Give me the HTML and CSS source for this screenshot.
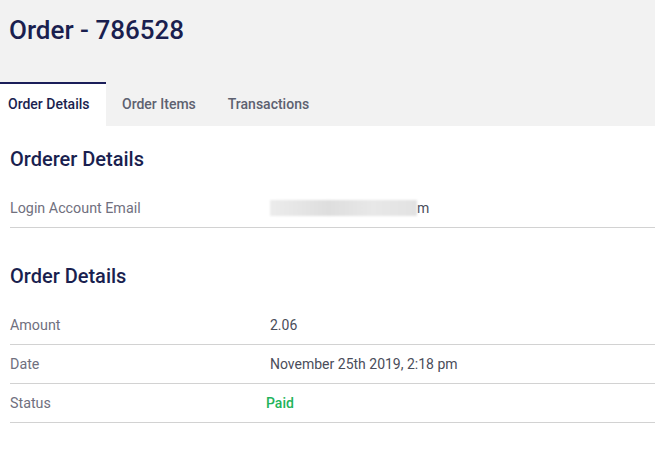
FILE: index.html
```html
<!DOCTYPE html>
<html>
<head>
<meta charset="utf-8">
<link rel="stylesheet" href="styles.css">
</head>
<body>
<header class="header">
  <h1 class="title">Order - 786528</h1>
  <nav class="tabs">
    <div class="tab active">Order Details</div>
    <div class="tab">Order Items</div>
    <div class="tab">Transactions</div>
  </nav>
</header>
<main class="content">
  <section class="section">
    <h2 class="section-title">Orderer Details</h2>
    <div class="row">
      <div class="label">Login Account Email</div>
      <div class="value"><span class="blur"></span>m</div>
    </div>
  </section>
  <section class="section">
    <h2 class="section-title">Order Details</h2>
    <div class="row">
      <div class="label">Amount</div>
      <div class="value">2.06</div>
    </div>
    <div class="row">
      <div class="label">Date</div>
      <div class="value">November 25th 2019, 2:18 pm</div>
    </div>
    <div class="row">
      <div class="label">Status</div>
      <div class="value paid">Paid</div>
    </div>
  </section>
</main>
</body>
</html>
```
FILE: styles.css
```css
* { box-sizing: border-box; }
body {
  margin: 0;
  font-family: Roboto, "Liberation Sans", sans-serif;
  background: #fff;
  width: 655px;
}
.header {
  background: #f2f2f2;
  height: 126px;
  display: flex;
  flex-direction: column;
  justify-content: space-between;
}
.title {
  margin: 0;
  padding: 14px 0 0 9px;
  font-size: 26px;
  font-weight: 500;
  color: #1a1f4f;
  line-height: 32px;
}
.tabs {
  display: flex;
  height: 44px;
}
.tab {
  padding: 0 16px;
  font-size: 14px;
  font-weight: 500;
  color: #5d6170;
  display: flex;
  align-items: center;
  border-top: 2px solid transparent;
  padding-bottom: 2px;
}
.tab.active {
  background: #fff;
  color: #1a1f4f;
  border-top-color: #1b1e5a;
  width: 106px;
  padding: 0 0 2px 8px;
}
.tab + .tab { padding-left: 16px; }
.content {
  padding-left: 10px;
}
.section { padding-top: 20px; }
.section + .section { padding-top: 35px; }
.section-title {
  margin: 0 0 17px;
  font-size: 20px;
  font-weight: 500;
  color: #1a1f4f;
  line-height: 26px;
}
.row {
  display: flex;
  align-items: center;
  height: 39px;
  border-bottom: 1px solid #d2d2d2;
  font-size: 14px;
  padding-bottom: 1px;
}
.label {
  width: 260px;
  color: #70707e;
  font-size: 14.3px;
}
.value {
  color: #4a4d5a;
  display: flex;
  align-items: center;
}
.paid {
  color: #22b35a;
  font-weight: 500;
  margin-left: -4px;
}
.blur {
  display: inline-block;
  width: 147px;
  height: 16px;
  background: linear-gradient(90deg, #ececec, #dedede 40%, #e8e8e8 70%, #e2e2e2);
  filter: blur(1px);
}
```
